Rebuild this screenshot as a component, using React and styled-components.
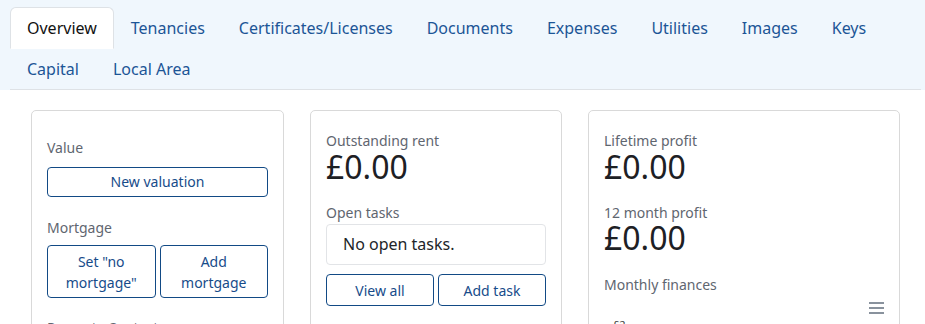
import React from "react";
import styled, { createGlobalStyle } from "styled-components";

const GlobalStyle = createGlobalStyle`
  html, body {
    margin: 0;
    padding: 0;
    background: #fff;
    overflow: hidden;
  }

  body {
    font-family: "Noto Sans", "Open Sans", sans-serif;
    color: #212529;
  }
`;

const TabBar = styled.div`
  background: #f0f7fd;
  padding-top: 7px;
`;

const TabList = styled.ul`
  display: flex;
  flex-wrap: wrap;
  list-style: none;
  margin: 0 4px 0 10px;
  padding: 0;
  border-bottom: 1px solid #dee2e6;
`;

const Tab = styled.li`
  margin-bottom: -1px;
  padding: 8px 16px;
  font-size: 16px;
  line-height: 24px;
  border: 1px solid ${(p) => (p.$active ? "#dee2e6" : "transparent")};
  border-bottom-color: transparent;
  border-radius: 6px 6px 0 0;
  background: ${(p) => (p.$active ? "#fff" : "transparent")};
  color: ${(p) => (p.$active ? "#111" : "#1c5596")};
  white-space: nowrap;
`;

const Cards = styled.div`
  display: grid;
  grid-template-columns: 253px 252px 312px;
  gap: 26px;
  padding: 20px 25px 0 31px;
  align-items: start;
`;

const Card = styled.div`
  border: 1px solid #d9d9d9;
  border-radius: 5px;
  padding: ${(p) => (p.$offset ? "27px" : "20px")} 15px 20px;
  min-height: 260px;
`;

const Label = styled.div`
  font-size: 14px;
  line-height: 19.6px;
  color: #5f6670;
  margin-top: ${(p) => p.$gap || 0}px;
`;

const Amount = styled.div`
  font-size: 32px;
  line-height: 32px;
  color: #1d2024;
`;

const Button = styled.button`
  display: block;
  width: 100%;
  font-family: inherit;
  font-size: 14px;
  line-height: 21px;
  padding: 3.5px 8px;
  color: #174c8a;
  background: #fff;
  border: 1px solid #124a85;
  border-radius: 4px;
`;

const ButtonRow = styled.div`
  display: grid;
  grid-template-columns: 1fr 1fr;
  gap: 4px;
  margin-top: ${(p) => p.$gap || 0}px;

  > ${Button} {
    padding: 4.5px 8px;
  }
`;

const SingleButton = styled(Button)`
  margin-top: 9px;
`;

const TaskBox = styled.div`
  margin-top: 2px;
  border: 1px solid #e2e4e7;
  border-radius: 4px;
  padding: 8px 16px;
  font-size: 16px;
  line-height: 23px;
`;

const ChartToolbar = styled.div`
  display: flex;
  justify-content: flex-end;
  padding-top: 7px;
`;

const AxisLabel = styled.div`
  font-size: 11px;
  color: #444;
  padding: 3px 0 0 9px;
`;

function MenuIcon() {
  return (
    <svg width="15" height="12" viewBox="0 0 15 12">
      <g stroke="#6b7685" strokeWidth="1.6">
        <line x1="0" y1="1" x2="15" y2="1" />
        <line x1="0" y1="6" x2="15" y2="6" />
        <line x1="0" y1="11" x2="15" y2="11" />
      </g>
    </svg>
  );
}

const tabs = [
  "Overview",
  "Tenancies",
  "Certificates/Licenses",
  "Documents",
  "Expenses",
  "Utilities",
  "Images",
  "Keys",
  "Capital",
  "Local Area",
];

export default function App() {
  return (
    <>
      <GlobalStyle />
      <TabBar>
        <TabList>
          {tabs.map((t) => (
            <Tab key={t} $active={t === "Overview"}>
              {t}
            </Tab>
          ))}
        </TabList>
      </TabBar>
      <Cards>
        <Card $offset>
          <Label>Value</Label>
          <SingleButton>New valuation</SingleButton>
          <Label $gap={21}>Mortgage</Label>
          <ButtonRow $gap={8}>
            <Button>Set "no mortgage"</Button>
            <Button>Add mortgage</Button>
          </ButtonRow>
          <Label $gap={20}>Property Contacts</Label>
        </Card>
        <Card>
          <Label>Outstanding rent</Label>
          <Amount>£0.00</Amount>
          <Label $gap={20}>Open tasks</Label>
          <TaskBox>No open tasks.</TaskBox>
          <ButtonRow $gap={9}>
            <Button>View all</Button>
            <Button>Add task</Button>
          </ButtonRow>
        </Card>
        <Card>
          <Label>Lifetime profit</Label>
          <Amount>£0.00</Amount>
          <Label $gap={20}>12 month profit</Label>
          <Amount>£0.00</Amount>
          <Label $gap={21}>Monthly finances</Label>
          <ChartToolbar>
            <MenuIcon />
          </ChartToolbar>
          <AxisLabel>£2</AxisLabel>
        </Card>
      </Cards>
    </>
  );
}
